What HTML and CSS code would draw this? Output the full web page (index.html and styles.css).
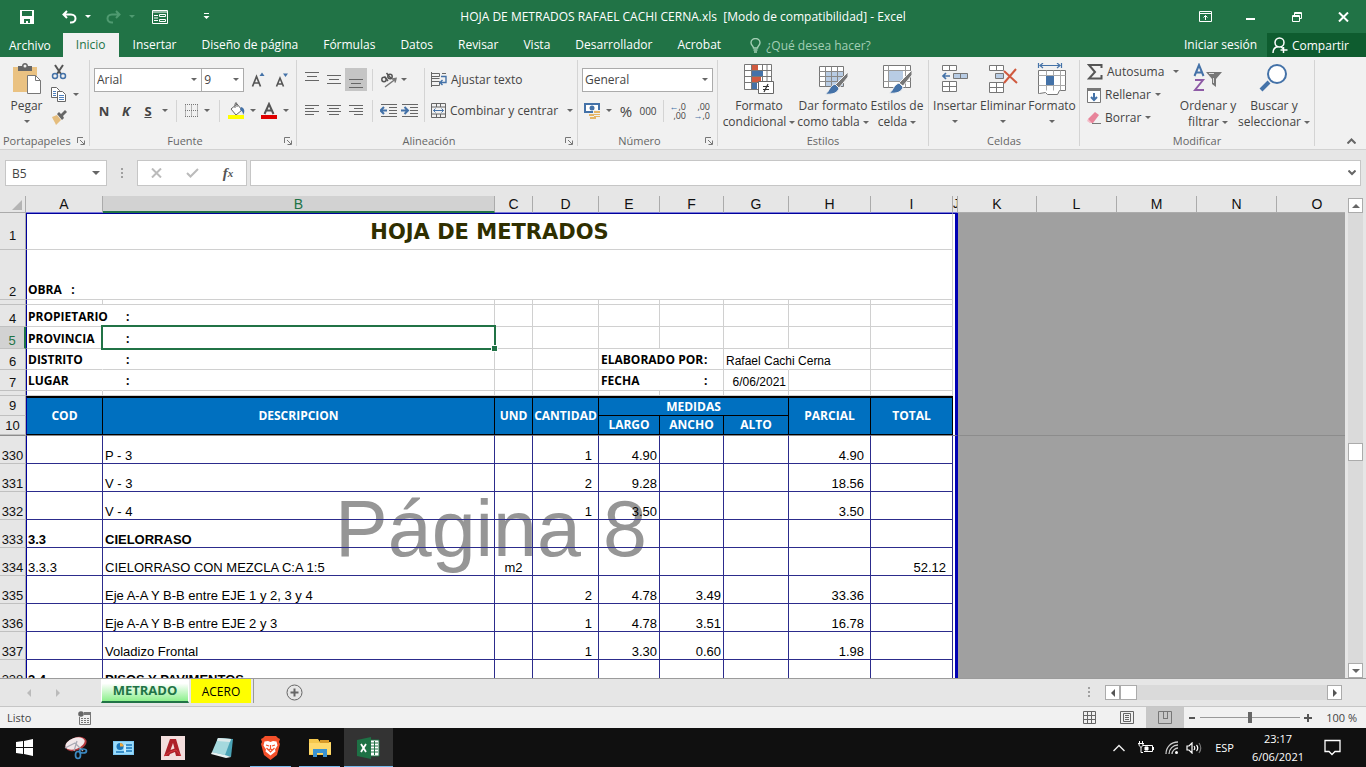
FILE: index.html
```html
<!DOCTYPE html>
<html lang="es">
<head>
<meta charset="utf-8">
<title>HOJA DE METRADOS RAFAEL CACHI CERNA.xls - Excel</title>
<link rel="stylesheet" href="styles.css">
</head>
<body>
<div class="app">

<header class="titlebar">
  <div class="quick">
    <button class="qbtn q-save" aria-label="Guardar"><svg width="14" height="14" viewBox="0 0 14 14"><path d="M0 0h14v14H0z" fill="#fff"/><path d="M2 1h10v5H2zM4 9h6v4H8v-2H6v2H4z" fill="#217346"/></svg></button>
    <button class="qbtn q-undo" aria-label="Deshacer"><svg width="15" height="14" viewBox="0 0 15 14" fill="none" stroke="#fff" stroke-width="2"><path d="M5 1L1.5 4.500 5 8M2 4.500h7c6 0 6 8 0 8H8"/></svg><i class="caret light"></i></button>
    <button class="qbtn q-redo" aria-label="Rehacer"><svg width="15" height="14" viewBox="0 0 15 14" fill="none" stroke="#4f9a70" stroke-width="2"><path d="M10 1l3.500 3.500L10 8M13 4.500H6c-6 0-6 8 0 8h1"/></svg><i class="caret dim"></i></button>
    <button class="qbtn q-form" aria-label="Formulario"><svg width="16" height="14" viewBox="0 0 16 14" fill="none" stroke="#fff"><path d="M.5.500h15v13H.5zM0 2h16M2 5.500h4M2 8h4M2 10.500h4M7.500 4.500h6v2h-6zM7.500 9.500h6v2h-6z"/></svg></button>
    <button class="qbtn q-more" aria-label="Personalizar"><svg width="7" height="7" viewBox="0 0 7 7"><path d="M1 0h5v1H1zM.500 3h6L3.500 6z" fill="#fff"/></svg></button>
  </div>
  <div class="doc-title">HOJA DE METRADOS RAFAEL CACHI CERNA.xls&nbsp; [Modo de compatibilidad] - Excel</div>
  <div class="window-buttons">
    <button aria-label="Opciones de cinta"><svg width="13" height="11" viewBox="0 0 13 11" fill="none" stroke="#fff"><path d="M.5.500h12v10H.5zM0 2.500h13M6.500 9V4.500M4.500 6.500l2-2 2 2"/></svg></button>
    <button aria-label="Minimizar"><svg width="10" height="11" viewBox="0 0 10 11"><path d="M0 7h9v2H0z" fill="#fff"/></svg></button>
    <button aria-label="Restaurar"><svg width="10" height="10" viewBox="0 0 10 10" fill="none" stroke="#fff"><path d="M.5 3.500h7v6h-7zM0 4.500h8M2.500 3V.500h7v6H8M2 1.500h8"/></svg></button>
    <button aria-label="Cerrar"><svg width="11" height="10" viewBox="0 0 11 10" stroke="#fff" stroke-width="2"><path d="M1 .500l9 9M10 .500l-9 9"/></svg></button>
  </div>
</header>

<nav class="tabs">
  <a class="tab file" href="#">Archivo</a>
  <a class="tab active" href="#">Inicio</a>
  <a class="tab" href="#">Insertar</a>
  <a class="tab" href="#">Diseño de página</a>
  <a class="tab" href="#">Fórmulas</a>
  <a class="tab" href="#">Datos</a>
  <a class="tab" href="#">Revisar</a>
  <a class="tab" href="#">Vista</a>
  <a class="tab" href="#">Desarrollador</a>
  <a class="tab" href="#">Acrobat</a>
  <a class="tab tellme" href="#"><svg width="11" height="15" viewBox="0 0 11 15" fill="none" stroke="#a3cfb5" stroke-width="1.400"><path d="M3.500 10C3.500 8 1 7.500 1 4.800a4.500 4.300 0 0 1 9 0C10 7.500 7.500 8 7.500 10zM3.500 12h4M4 14h3"/></svg>¿Qué desea hacer?</a>
  <a class="signin" href="#">Iniciar sesión</a>
  <button class="share"><svg width="16" height="17" viewBox="0 0 16 17" fill="none" stroke="#fff" stroke-width="1.500"><circle cx="7.500" cy="5.500" r="4.500"/><path d="M1 16c0-4 2.500-6 5-6.500M9 10l2 1.500M11.500 10v6M8.500 13h7"/></svg>Compartir</button>
</nav>

<section class="ribbon">
  <div class="group g-clip">
    <div class="body">
      <button class="big b-paste"><svg width="30" height="32" viewBox="0 0 30 32"><path d="M1 4h24v25H1z" fill="#eac282"/><path d="M6 3h4c0-4 6-4 6 0h4v5H6z" fill="#666"/><circle cx="13" cy="3" r="1.500" fill="#f1f1f1"/><path d="M15.500 12.500h8l5 5v13h-13z" fill="#fff" stroke="#777"/><path d="M23.500 12.500v5h5" fill="none" stroke="#777"/></svg><span>Pegar</span><i class="caret"></i></button>
      <div class="stack">
        <button aria-label="Cortar"><svg width="16" height="16" viewBox="0 0 16 16" fill="none" stroke-width="1.500"><path d="M4 1l6 9M12 1l-6 9" stroke="#555" stroke-width="2"/><circle cx="4" cy="12" r="2.500" stroke="#4472a8"/><circle cx="12" cy="12" r="2.500" stroke="#4472a8"/></svg></button>
        <button aria-label="Copiar"><svg width="16" height="15" viewBox="0 0 16 15" fill="#fff" stroke="#666"><path d="M.5.500h5l3 3v7h-8z"/><path d="M6.500 4.500h5l3 3v7h-8z"/><path d="M2 4.500h3M2 6.500h3M2 8.500h3M8 8.500h5M8 10.500h5M8 12.500h5" stroke="#4f81bd"/></svg><i class="caret"></i></button>
        <button aria-label="Copiar formato"><svg width="17" height="15" viewBox="0 0 17 15"><path d="M1 7l5-2 4 5-5 5C4 12 2 10 1 7z" fill="#e5bd7d"/><path d="M6 4l2-2 2 2 4-4 2 2-4 4 1 2-2 2z" fill="#666"/></svg></button>
      </div>
    </div>
    <div class="glabel"><span>Portapapeles</span><button class="launch" aria-label="Más"><svg width="8" height="8" viewBox="0 0 8 8" fill="none" stroke="#777"><path d="M.5 6V.500H6M3 3l4 4M7.500 3.500v4h-4"/></svg></button></div>
  </div>

  <div class="group g-font">
    <div class="body rows">
      <div class="row">
        <span class="pick p-font"><select aria-label="Fuente"><option>Arial</option></select><i class="caret"></i></span><span class="pick p-size"><select aria-label="Tamaño"><option>9</option></select><i class="caret"></i></span>
        <button class="w24 grow-a" aria-label="Aumentar"><svg width="14" height="16" viewBox="0 0 14 16"><path d="M1.500 14.500L5.500 4.500l4 10M3 11h5" fill="none" stroke="#555" stroke-width="1.700"/><path d="M8.500 4L11 .500 13.500 4z" fill="#4472a8"/></svg></button>
        <button class="w24" aria-label="Disminuir"><svg width="13" height="16" viewBox="0 0 13 16"><path d="M1.500 14.500L5 6l3.500 8.500M3 12h4" fill="none" stroke="#555" stroke-width="1.600"/><path d="M8 1.500h5L10.500 5z" fill="#4472a8"/></svg></button>
      </div>
      <div class="row">
        <button class="w22 bold">N</button><button class="w22 bold ital">K</button><button class="w22 bold under">S</button><button class="w12"><i class="caret"></i></button>
        <i class="sep"></i>
        <button class="w18" aria-label="Bordes"><svg width="13" height="13" viewBox="0 0 13 13" fill="none" stroke="#777"><path d="M.5.500v12M6.500.500v12M12.500.500v12M0 .500h13M0 6.500h13" stroke-dasharray="1 1"/><path d="M0 12.500h13" stroke="#777" stroke-dasharray="1 1"/></svg></button><button class="w14"><i class="caret"></i></button>
        <i class="sep"></i>
        <button class="w22" aria-label="Relleno"><svg width="17" height="17" viewBox="0 0 17 17"><path d="M3 7l6-5 5 6-6 5z" fill="#fff" stroke="#666"/><path d="M7 6V2q1-3 2 0v3" fill="none" stroke="#666"/><path d="M13 5c4 1 4 5 2 8 0-3-1-4-3-5z" fill="#4472a8"/><path d="M0 13h16v4H0z" fill="#ff0"/></svg></button><button class="w11"><i class="caret"></i></button>
        <button class="w22" aria-label="Color de fuente"><svg width="16" height="17" viewBox="0 0 16 17"><path d="M3.500 12L8 2l4.500 10M5 8.500h6" fill="none" stroke="#555" stroke-width="2"/><path d="M0 13h16v4H0z" fill="#e00000"/></svg></button><button class="w11"><i class="caret"></i></button>
      </div>
    </div>
    <div class="glabel"><span>Fuente</span><button class="launch" aria-label="Más"><svg width="8" height="8" viewBox="0 0 8 8" fill="none" stroke="#777"><path d="M.5 6V.500H6M3 3l4 4M7.500 3.500v4h-4"/></svg></button></div>
  </div>

  <div class="group g-align">
    <div class="body">
      <div class="rows">
        <div class="row">
          <button class="w22" aria-label="Arriba"><svg width="14" height="16" viewBox="0 0 14 16" stroke="#666"><path d="M0 .500h14M2 4.500h10M0 8.500h14"/></svg></button><button class="w22" aria-label="Medio"><svg width="14" height="16" viewBox="0 0 14 16" stroke="#666"><path d="M0 3.500h14M2 7.500h10M0 11.500h14"/></svg></button><button class="w22 pressed" aria-label="Abajo"><svg width="14" height="16" viewBox="0 0 14 16" stroke="#666"><path d="M0 7.500h14M2 11.500h10M0 15.500h14"/></svg></button>
          <i class="sep"></i>
          <button class="w20" aria-label="Orientación"><svg width="17" height="16" viewBox="0 0 17 16" fill="none" stroke="#555" stroke-width="1.500"><circle cx="4" cy="7.500" r="2.200"/><path d="M4.500 4.500l3.500 4.500M6.500 1l5 6"/><circle cx="10" cy="4.500" r="2.200"/><path d="M5 15L15 7.500M12 7l4-.500-1 4" stroke="#777"/></svg></button><button class="w12"><i class="caret"></i></button>
        </div>
        <div class="row">
          <button class="w22" aria-label="Izquierda"><svg width="14" height="11" viewBox="0 0 14 11" stroke="#666"><path d="M0 .500h14M0 3.500h9M0 6.500h14M0 9.500h9"/></svg></button><button class="w22" aria-label="Centro"><svg width="14" height="11" viewBox="0 0 14 11" stroke="#666"><path d="M0 .500h14M2 3.500h10M0 6.500h14M2 9.500h10"/></svg></button><button class="w22" aria-label="Derecha"><svg width="14" height="11" viewBox="0 0 14 11" stroke="#666"><path d="M0 .500h14M5 3.500h9M0 6.500h14M5 9.500h9"/></svg></button>
          <i class="sep"></i>
          <button class="w20" aria-label="Menos sangría"><svg width="17" height="13" viewBox="0 0 17 13" fill="none" stroke="#666"><path d="M1 .500h16M9 3.500h8M9 6.500h8M9 9.500h8M1 12.500h16"/><path d="M0 6.500h7M4 3L.5 6.500 4 10" stroke="#4472a8" stroke-width="2"/></svg></button><button class="w22" aria-label="Más sangría"><svg width="17" height="13" viewBox="0 0 17 13" fill="none" stroke="#666"><path d="M1 .500h16M9 3.500h8M9 6.500h8M9 9.500h8M1 12.500h16"/><path d="M0 6.500h7M3.500 3L7 6.500 3.500 10" stroke="#4472a8" stroke-width="2"/></svg></button>
        </div>
      </div>
      <i class="sep tall"></i>
      <div class="rows">
        <div class="row"><button class="wide"><svg width="16" height="16" viewBox="0 0 16 16" fill="none" stroke="#666"><path d="M.5 1.500h8v3h-8zM.5 6.500h8M.5 9.500h8v4h-8zM11 1.500h4M.5 0v15"/><path d="M10 4.500h5v6H9M11.500 8L9 10.500l2.500 2.500" stroke="#4472a8" stroke-width="1.400"/></svg>Ajustar texto</button></div>
        <div class="row"><button class="wide"><svg width="15" height="15" viewBox="0 0 15 15" fill="none" stroke="#666"><path d="M.5.500h14v14H.5zM.5 4h14M.5 11h14M5.500.500V4M9.500.500V4M5.500 11v3.500M9.500 11v3.500"/><path d="M2.500 7.500h10M4.500 5.500l-2 2 2 2M10.500 5.500l2 2-2 2" stroke="#4472a8"/></svg>Combinar y centrar<i class="caret end"></i></button></div>
      </div>
    </div>
    <div class="glabel"><span>Alineación</span><button class="launch" aria-label="Más"><svg width="8" height="8" viewBox="0 0 8 8" fill="none" stroke="#777"><path d="M.5 6V.500H6M3 3l4 4M7.500 3.500v4h-4"/></svg></button></div>
  </div>

  <div class="group g-num">
    <div class="body rows">
      <div class="row"><span class="pick p-num"><select aria-label="Formato de número"><option>General</option></select><i class="caret"></i></span></div>
      <div class="row">
        <button class="w22" aria-label="Moneda"><svg width="17" height="17" viewBox="0 0 17 17"><path d="M1 2h14v8H1z" fill="#fff" stroke="#4472a8" stroke-width="2"/><circle cx="8" cy="6" r="2.500" fill="#4472a8"/><path d="M9 8h7v8H5v-4h4z" fill="#f1f1f1"/><path d="M10 9h6v2h-6zM10 12h6v1h-6zM5 12h5v2H5zM6 15h6v2H6zM10 14h6v1h-6z" fill="#e5b566"/></svg></button><button class="w11"><i class="caret"></i></button>
        <button class="w24 pct">%</button><button class="w20 mil">000</button>
        <i class="sep"></i>
        <button class="w20 dec" aria-label="Aumentar decimales"><span><b>←</b>,0</span><span>,00</span></button><button class="w24 dec" aria-label="Disminuir decimales"><span>,00</span><span><b>→</b>,0</span></button>
      </div>
    </div>
    <div class="glabel"><span>Número</span><button class="launch" aria-label="Más"><svg width="8" height="8" viewBox="0 0 8 8" fill="none" stroke="#777"><path d="M.5 6V.500H6M3 3l4 4M7.500 3.500v4h-4"/></svg></button></div>
  </div>

  <div class="group g-styles">
    <div class="body">
      <button class="big w74"><svg width="32" height="32" viewBox="0 0 32 32"><path d="M1.500 1.500h27v25h-27z" fill="#fff" stroke="#777"/><path d="M1.500 7.500h27M1.500 13.500h27M1.500 19.500h27M8.500 1.500v25M19.500 1.500v25M24 1.500v25" stroke="#777" fill="none"/><path d="M9 2h6v5H9zM9 14h9v5H9z" fill="#d05a3f"/><path d="M9 8h11v5H9zM9 20h5v6H9z" fill="#4472a8"/><path d="M15.500 18.500h15v12h-15z" fill="#fff" stroke="#666"/><path d="M20 23.500h6M20 26.500h6M25 21l-4 8" stroke="#333" stroke-width="1.200"/></svg><span>Formato</span><span>condicional<i class="caret"></i></span></button>
      <button class="big w74"><svg width="32" height="32" viewBox="0 0 32 32"><path d="M2.500 3.500h24v20h-24z" fill="#fff" stroke="#777"/><path d="M8 9h18v14H8z" fill="#b8cce4"/><path d="M2.500 8.500h24M2.500 13.500h24M2.500 18.500h24M8.500 3.500v20M14.500 3.500v20M20.500 3.500v20" stroke="#888" fill="none"/><path d="M31 9v5l-9 11-4-3z" fill="#777" stroke="#f1f1f1"/><path d="M18 21l4 4c-1 5-7 7-14 6 4-1 4-8 10-10z" fill="#4472a8" stroke="#f1f1f1"/></svg><span>Dar formato</span><span>como tabla<i class="caret"></i></span></button>
      <button class="big w54"><svg width="32" height="32" viewBox="0 0 32 32"><path d="M2.500 2.500h27v22h-27z" fill="#fff" stroke="#777"/><path d="M2.500 7.500h27M2.500 18.500h27M7.500 2.500v22M24.500 2.500v22" stroke="#999" fill="none"/><path d="M8 8h14v10H8z" fill="#b8cce4"/><path d="M31 7v5l-9 11-4-3z" fill="#777" stroke="#f1f1f1"/><path d="M18 20l4 4c-1 5-7 7-14 6 4-1 4-8 10-10z" fill="#4472a8" stroke="#f1f1f1"/></svg><span>Estilos de</span><span>celda<i class="caret"></i></span></button>
    </div>
    <div class="glabel"><span>Estilos</span></div>
  </div>

  <div class="group g-cells">
    <div class="body">
      <button class="big w48"><svg width="28" height="32" viewBox="0 0 28 32" fill="#fff" stroke="#777"><path d="M1.500 2.500h14v5h-14zM8.500 2.500v5M1.500 18.500h14v10h-14zM8.500 18.500v10M1.500 23.500h14"/><path d="M12.500 10.500h14v5h-14z" fill="#b8cce4"/><path d="M19.500 10.500v5"/><path d="M2 13h7M5 10l-3 3 3 3" fill="none" stroke="#4472a8" stroke-width="1.700"/></svg><span>Insertar</span><i class="caret"></i></button>
      <button class="big w48"><svg width="30" height="32" viewBox="0 0 30 32" fill="#fff" stroke="#777"><path d="M1.500 2.500h14v5h-14zM8.500 2.500v5M1.500 19.500h14v10h-14zM8.500 19.500v10M1.500 24.500h14"/><path d="M7.500 10.500h8v5h-8z" fill="#b8cce4"/><path d="M16 8l13 12M28 6L16 20" fill="none" stroke="#d05a3f" stroke-width="2"/></svg><span>Eliminar</span><i class="caret"></i></button>
      <button class="big w50"><svg width="30" height="32" viewBox="0 0 30 32" fill="#fff" stroke="#777"><path d="M1.500 7.500h27v20h-6l-2 4h-10l-2-2-6 1h-1z"/><path d="M1.500 12.500h27M1.500 22.500h27M9.500 7.500v20M16.500 7.500v20M23.500 7.500v20" stroke="#aaa"/><path d="M9 13h8v9H9z" fill="#4472a8" stroke="none"/><path d="M1.500 0v5M24.500 0v5M3 2.500h20M6 0L3 2.500 6 5M20 0l3 2.500L20 5" fill="none" stroke="#4472a8" stroke-width="1.200"/></svg><span>Formato</span><i class="caret"></i></button>
    </div>
    <div class="glabel"><span>Celdas</span></div>
  </div>

  <div class="group g-edit">
    <div class="body">
      <div class="stack">
        <button><svg width="16" height="16" viewBox="0 0 16 16" fill="none" stroke="#555" stroke-width="2"><path d="M14.500 4V1H2l6 7-6 6.500h12.500V11"/></svg>Autosuma<i class="caret end"></i></button>
        <button><svg width="14" height="16" viewBox="0 0 14 16" fill="none"><path d="M.5 3.500h13v12H.5z" fill="#fff" stroke="#777"/><path d="M0 1h14v3H0z" fill="#777"/><path d="M7 6v7M4 10l3 3 3-3" stroke="#4472a8" stroke-width="2"/></svg>Rellenar<i class="caret"></i></button>
        <button><svg width="14" height="14" viewBox="0 0 14 14"><path d="M1 8l7-7 4 3-6 8H3z" fill="#e8849a"/><path d="M1 8l4 4H3L0 10z" fill="#f4bcc8"/><path d="M5 12.500h9" stroke="#777"/></svg>Borrar<i class="caret"></i></button>
      </div>
      <button class="big w58"><svg width="30" height="32" viewBox="0 0 30 32" fill="none"><path d="M1.500 13L6 2l4.500 11M3 9.500h6" stroke="#4472a8" stroke-width="2"/><path d="M2 17h8L2 27h9" stroke="#8e5ba6" stroke-width="2"/><path d="M13 9h16l-6 7v8l-4-3v-5z" fill="#777"/><path d="M16 10.500h5M20.500 15v5" stroke="#ddd"/></svg><span>Ordenar y</span><span>filtrar<i class="caret"></i></span></button>
      <button class="big w74"><svg width="30" height="32" viewBox="0 0 30 32" fill="none" stroke="#4472a8"><path d="M2 27l8-8" stroke-width="4"/><circle cx="18" cy="11" r="9" fill="#fff" stroke-width="2"/></svg><span>Buscar y</span><span>seleccionar<i class="caret"></i></span></button>
    </div>
    <div class="glabel"><span>Modificar</span></div>
  </div>
  <button class="collapse" aria-label="Contraer"><svg width="9" height="6" viewBox="0 0 9 6" fill="none" stroke="#666" stroke-width="2"><path d="M.500 5.500l4-4 4 4"/></svg></button>
</section>

<section class="formula">
  <div class="namebox"><input type="text" value="B5" aria-label="Cuadro de nombres"><i class="caret big-caret"></i></div>
  <i class="dots"></i>
  <div class="fx">
    <button aria-label="Cancelar"><svg width="11" height="10" viewBox="0 0 11 10" stroke="#bbb" stroke-width="2"><path d="M1 .500l9 9M10 .500l-9 9"/></svg></button>
    <button aria-label="Introducir"><svg width="13" height="10" viewBox="0 0 13 10" fill="none" stroke="#bbb" stroke-width="2"><path d="M1 5l3.500 3.500L12 1"/></svg></button>
    <button class="fxb">f<small>x</small></button>
  </div>
  <div class="fbar"><input type="text" aria-label="Barra de fórmulas"><svg width="8" height="6" viewBox="0 0 8 6" fill="none" stroke="#666" stroke-width="2"><path d="M.500.500L4 4 7.500.500"/></svg></div>
</section>

<main class="sheet">
  <div class="cells">
    <div class="watermark">Página 8</div>
    <table>
      <colgroup><col class="c-hdr"><col class="c-a"><col class="c-b"><col class="c-c"><col class="c-d"><col class="c-e"><col class="c-f"><col class="c-g"><col class="c-h"><col class="c-i"><col class="c-j"><col class="c-k"><col class="c-l"><col class="c-l"><col class="c-l"><col></colgroup>
      <thead>
        <tr class="letters"><th class="corner"><i></i></th><th>A</th><th class="sel">B</th><th>C</th><th>D</th><th>E</th><th>F</th><th>G</th><th>H</th><th>I</th><th class="tiny"><span>J</span></th><th class="beyond">K</th><th class="beyond">L</th><th class="beyond">M</th><th class="beyond">N</th><th class="beyond last">O</th></tr>
      </thead>
      <tbody class="top">
        <tr class="r37"><th class="n1">1</th><td class="name" colspan="9">HOJA DE METRADOS</td><td class="edge"></td><td class="off" colspan="5"></td></tr>
        <tr class="r50"><th>2</th><td class="lab" colspan="9">OBRA&nbsp;&nbsp; :</td><td class="edge"></td><td class="off" colspan="5"></td></tr>
        <tr class="r5"><th class="cut"><span>3</span></th><td></td><td></td><td></td><td></td><td></td><td></td><td></td><td></td><td></td><td class="edge"></td><td class="off" colspan="5"></td></tr>
        <tr class="r22"><th>4</th><td class="lab open"><span>PROPIETARIO</span>:</td><td></td><td></td><td></td><td></td><td></td><td></td><td></td><td></td><td class="edge"></td><td class="off" colspan="5"></td></tr>
        <tr class="r22"><th class="sel">5</th><td class="lab open"><span>PROVINCIA</span>:</td><td class="current"><i></i></td><td></td><td></td><td></td><td></td><td></td><td></td><td></td><td class="edge"></td><td class="off" colspan="5"></td></tr>
        <tr class="r21"><th>6</th><td class="lab open"><span>DISTRITO</span>:</td><td></td><td></td><td></td><td class="lab by" colspan="2"><span>ELABORADO POR</span>:</td><td class="val open">Rafael Cachi Cerna</td><td></td><td></td><td class="edge"></td><td class="off" colspan="5"></td></tr>
        <tr class="r21"><th>7</th><td class="lab open"><span>LUGAR</span>:</td><td></td><td></td><td></td><td class="lab by" colspan="2"><span>FECHA</span>:</td><td class="val num">6/06/2021</td><td></td><td></td><td class="edge"></td><td class="off" colspan="5"></td></tr>
        <tr class="r5"><th></th><td></td><td></td><td></td><td></td><td></td><td></td><td></td><td></td><td></td><td class="edge"></td><td class="off" colspan="5"></td></tr>
        <tr class="r20 heads up"><th>9</th><td rowspan="2">COD</td><td rowspan="2">DESCRIPCION</td><td rowspan="2">UND</td><td rowspan="2">CANTIDAD</td><td colspan="3">MEDIDAS</td><td rowspan="2">PARCIAL</td><td rowspan="2">TOTAL</td><td class="edge"></td><td class="off" colspan="5"></td></tr>
        <tr class="r19 heads"><th>10</th><td class="first-sub">LARGO</td><td>ANCHO</td><td>ALTO</td><td class="edge"></td><td class="off" colspan="5"></td></tr>
      </tbody>
      <tbody class="data">
        <tr class="first"><th>330</th><td></td><td>P - 3</td><td></td><td class="q">1</td><td class="num">4.90</td><td></td><td></td><td class="p">4.90</td><td></td><td class="edge"></td><td class="off" colspan="5"></td></tr>
        <tr><th>331</th><td></td><td>V - 3</td><td></td><td class="q">2</td><td class="num">9.28</td><td></td><td></td><td class="p">18.56</td><td></td><td class="edge"></td><td class="off" colspan="5"></td></tr>
        <tr><th>332</th><td></td><td>V - 4</td><td></td><td class="q">1</td><td class="num">3.50</td><td></td><td></td><td class="p">3.50</td><td></td><td class="edge"></td><td class="off" colspan="5"></td></tr>
        <tr class="strong"><th>333</th><td>3.3</td><td>CIELORRASO</td><td></td><td></td><td></td><td></td><td></td><td></td><td></td><td class="edge"></td><td class="off" colspan="5"></td></tr>
        <tr><th>334</th><td>3.3.3</td><td>CIELORRASO CON MEZCLA C:A 1:5</td><td class="u">m2</td><td></td><td></td><td></td><td></td><td></td><td class="p">52.12</td><td class="edge"></td><td class="off" colspan="5"></td></tr>
        <tr><th>335</th><td></td><td>Eje A-A Y B-B entre EJE 1 y 2, 3 y 4</td><td></td><td class="q">2</td><td class="num">4.78</td><td class="num">3.49</td><td></td><td class="p">33.36</td><td></td><td class="edge"></td><td class="off" colspan="5"></td></tr>
        <tr><th>336</th><td></td><td>Eje A-A Y B-B entre EJE 2 y 3</td><td></td><td class="q">1</td><td class="num">4.78</td><td class="num">3.51</td><td></td><td class="p">16.78</td><td></td><td class="edge"></td><td class="off" colspan="5"></td></tr>
        <tr><th>337</th><td></td><td>Voladizo Frontal</td><td></td><td class="q">1</td><td class="num">3.30</td><td class="num">0.60</td><td></td><td class="p">1.98</td><td></td><td class="edge"></td><td class="off" colspan="5"></td></tr>
        <tr class="strong"><th>338</th><td>3.4</td><td>PISOS Y PAVIMENTOS</td><td></td><td></td><td></td><td></td><td></td><td></td><td></td><td class="edge"></td><td class="off" colspan="5"></td></tr>
      </tbody>
    </table>
  </div>
  <div class="vscroll">
    <button aria-label="Subir"><i class="tri up"></i></button>
    <div class="track"><i class="thumb"></i></div>
    <button aria-label="Bajar"><i class="tri down"></i></button>
  </div>
</main>

<div class="sheettabs">
  <div class="navs"><i class="tri left pale"></i><i class="tri right pale"></i></div>
  <button class="stab on">METRADO</button>
  <button class="stab yellow">ACERO</button>
  <button class="add" aria-label="Hoja nueva"><svg width="17" height="17" viewBox="0 0 17 17" fill="none" stroke="#666"><circle cx="8.500" cy="8.500" r="7.500"/><path d="M4.500 8.500h8M8.500 4.500v8" stroke-width="2"/></svg></button>
  <i class="dots"></i>
  <div class="hscroll">
    <button aria-label="Izquierda"><i class="tri left"></i></button><i class="thumb"></i><div class="track"></div><button aria-label="Derecha"><i class="tri right"></i></button>
  </div>
</div>

<footer class="status">
  <span class="ready">Listo</span>
  <svg width="13" height="14" viewBox="0 0 13 14"><circle cx="3" cy="3" r="2.800" fill="#666"/><path d="M6 1h7v3H6z" fill="#777"/><path d="M1.500 6v7.500h11V4" fill="none" stroke="#777"/><path d="M3 7.500h8M3 9.500h8M3 11.500h8" stroke="#777" stroke-dasharray="2 1"/></svg>
  <div class="views">
    <button aria-label="Normal"><svg width="13" height="13" viewBox="0 0 13 13" fill="none" stroke="#666"><path d="M.5.500h12v12H.5zM.5 4.500h12M.5 8.500h12M4.500.500v12M8.500.500v12"/></svg></button>
    <button aria-label="Diseño"><svg width="14" height="13" viewBox="0 0 14 13" fill="none" stroke="#666"><path d="M.5.500h13v12H.5zM3.500 2.500h7v8h-7zM5 4.500h4M5 6.500h4M5 8.500h4"/></svg></button>
    <button class="on" aria-label="Saltos"><svg width="14" height="13" viewBox="0 0 14 13" fill="none" stroke="#777"><path d="M.5.500h13v12H.5zM5.500.500v7M9.500.500v7M5 7.500h5"/></svg></button>
  </div>
  <button class="zoomb" aria-label="Alejar"><svg width="7" height="8" viewBox="0 0 7 8"><path d="M0 3h6v2H0z" fill="#555"/></svg></button>
  <input class="zoom" type="range" min="0" max="200" value="100" aria-label="Zoom">
  <button class="zoomb" aria-label="Acercar"><svg width="8" height="8" viewBox="0 0 8 8"><path d="M0 3h8v2H0zM3 0h2v8H3z" fill="#555"/></svg></button>
  <span class="pctv">100 %</span>
</footer>

<div class="taskbar">
  <button class="start" aria-label="Inicio"><svg width="17" height="17" viewBox="0 0 17 17" fill="#fff"><path d="M0 3l7-1v6H0zM8 2l9-2v8H8zM0 9h7v6l-7-1zM8 9h9v8l-9-2z"/></svg></button>
  <button aria-label="Recortes"><svg width="26" height="24" viewBox="0 0 26 24"><ellipse cx="14" cy="8" rx="11" ry="6.500" transform="rotate(-20 14 8)" fill="#b33a3f"/><ellipse cx="13" cy="7.500" rx="10" ry="5.500" transform="rotate(-20 13 7.500)" fill="#f2e8ea"/><path d="M3 12l10-5 8 8M15 5l-3 10" fill="none" stroke="#a9a9b4" stroke-width="1.300"/><ellipse cx="21" cy="15" rx="3.500" ry="2" fill="none" stroke="#3c8ac4" stroke-width="1.700"/><ellipse cx="16" cy="19" rx="2.500" ry="3.500" fill="none" stroke="#3c8ac4" stroke-width="1.700"/></svg></button>
  <button aria-label="Panel"><svg width="22" height="16" viewBox="0 0 22 16"><path d="M0 1h21v14H0z" fill="#7cc7f2"/><path d="M1 2h19v12H1z" fill="#9bdcfb"/><circle cx="7" cy="6.500" r="3.500" fill="#1a76ba"/><path d="M7 6.500V3a3.500 3.500 0 0 1 3.500 3.500z" fill="#f3a83c"/><path d="M3 12h8M13 5h6M13 8h6M13 11h6" stroke="#1a76ba" stroke-width="1.500"/><path d="M12 5v7" stroke="#fff"/></svg></button>
  <button aria-label="AutoCAD"><svg width="24" height="24" viewBox="0 0 24 24"><path d="M0 0h24v24H0z" fill="#f3dedd"/><path d="M3 20L9 3h6l5 17h-5l-1-4-5 2-1 2z" fill="#ad2129"/><path d="M9.500 14l2.500-7 1.500 5.500z" fill="#f3dedd"/><path d="M3 20l6-4 6-2 5 6" fill="none" stroke="#d5363c"/></svg></button>
  <button aria-label="Bloc de notas"><svg width="24" height="23" viewBox="0 0 24 23"><path d="M8 2l15 1-2 18-18-4z" fill="#4aa3b6"/><path d="M8 2l13 1-6 16L2 16z" fill="#a5d9de"/><path d="M8 2l13 1-1 3L7 5z" fill="#dce9ea"/><path d="M2 16l13 3 6 2-5 1L1 18z" fill="#e9f2f2"/></svg></button>
  <button class="run" aria-label="Brave"><svg width="21" height="24" viewBox="0 0 21 24"><path d="M5 0h11l2 2 2 1-1 3 1 2-3 11-6.500 5L4 19 1 8l1-2-1-3 2-1z" fill="#f4502a"/><path d="M4.500 5.500L8 5l2.500 1L13 5l3.500.500 1 4-2.500 4 .500 2-5 4-5-4 .500-2-2.500-4z" fill="#fff"/><path d="M6 9l3 1M15 9l-3 1M10.500 9v4l-2 1 2 2 2-2-2-1M6.500 12l2 2M14.500 12l-2 2" fill="none" stroke="#f4502a" stroke-width="1.200"/></svg></button>
  <button class="run" aria-label="Explorador"><svg width="22" height="19" viewBox="0 0 22 19"><path d="M0 1h9l2 3h11v13H0z" fill="#f5c84d"/><path d="M0 5h22v11H0z" fill="#ffd96b"/><path d="M11 2h9v3h-9z" fill="#d99a28"/><path d="M4 19v-8h14v8h-4v-4H8v4z" fill="#3a93d2"/></svg></button>
  <button class="run current-app" aria-label="Excel"><svg width="23" height="22" viewBox="0 0 23 22"><path d="M13 3h9v16h-9z" fill="#fff" stroke="#217346"/><path d="M14 6h7M14 9h7M14 12h7M14 15h7M17.500 4v14" stroke="#217346"/><path d="M0 3l14-3v22L0 19z" fill="#1e7145"/><path d="M4 7l5 8M9 7l-5 8" stroke="#fff" stroke-width="1.800"/></svg></button>
  <div class="tray">
    <svg class="t-up" width="12" height="8" viewBox="0 0 12 8" fill="none" stroke="#eee" stroke-width="1.400"><path d="M.5 7L6 1.500 11.500 7"/></svg>
    <svg class="t-bat" width="16" height="13" viewBox="0 0 16 13" fill="none" stroke="#fff"><path d="M5 4.500h9.500v6H6M15.500 6v3M1.500 0v2M4.500 0v2M0 2.500h6M1 3c0 4 4 4 4 0M3 6v5.500h2"/><path d="M7 6h3v3H7z" fill="#fff"/></svg>
    <svg class="t-net" width="14" height="14" viewBox="0 0 14 14" fill="none" stroke="#ccc" stroke-width="1.300"><path d="M1 13C1 6 6 1 13 1M4 13c0-5 4-9 9-9M7 13c0-3 3-6 6-6"/><circle cx="11.500" cy="11.500" r="1.500" fill="#fff" stroke="none"/></svg>
    <svg class="t-vol" width="16" height="12" viewBox="0 0 16 12" fill="none" stroke="#fff" stroke-width="1.200"><path d="M1 4h2l3-3v10L3 8H1zM8 4q1.500 2 0 4M10.500 3q2.500 3 0 6"/><path d="M13 1q3.500 5 0 10" stroke="#777"/></svg>
    <span class="lang">ESP</span>
    <span class="clock"><span>23:17</span><span>6/06/2021</span></span>
    <svg class="t-note" width="17" height="17" viewBox="0 0 17 17" fill="none" stroke="#fff" stroke-width="1.300"><path d="M1 1.500h15v11h-5l-3 3-3-3H1z"/></svg>
  </div>
</div>
</div>
</body>
</html>
```
FILE: styles.css
```css
* { box-sizing: border-box; }
body { margin: 0; font-family: "Open Sans", "Noto Sans", sans-serif; font-size: 12px; color: #444; }
button { font: inherit; color: inherit; background: none; border: 0; padding: 0; margin: 0; display: flex; align-items: center; justify-content: center; white-space: nowrap; }
input, select { font: inherit; color: inherit; border: 0; background: none; padding: 0; margin: 0; outline: 0; min-width: 0; appearance: none; }
a { color: inherit; text-decoration: none; white-space: nowrap; }
svg { display: block; flex: none; }
.app { height: 100vh; display: flex; flex-direction: column; overflow: hidden; background: #e6e6e6; }

.caret { display: inline-block; flex: none; width: 0; height: 0; border: 3px solid transparent; border-top-color: #666; border-bottom: 0; }
.caret.light { border-top-color: #fff; }
.caret.dim { border-top-color: #4f9a70; }
.tri { display: block; width: 0; height: 0; border: 4px solid transparent; }
.tri.up { border-bottom-color: #666; border-top: 0; }
.tri.down { border-top-color: #666; border-bottom: 0; }
.tri.left { border-right-color: #555; border-left: 0; }
.tri.right { border-left-color: #555; border-right: 0; }
.tri.left.pale { border-right-color: #bbb; }
.tri.right.pale { border-left-color: #bbb; }

.titlebar { flex: none; height: 33px; background: #217346; color: #fff; display: grid; grid-template-columns: 1fr auto 1fr; align-items: center; }
.quick { display: flex; align-items: center; padding-left: 20px; }
.qbtn { gap: 8px; height: 30px; }
.q-undo { margin-left: 28px; }
.q-redo { margin-left: 15px; }
.q-form { margin-left: 17px; }
.q-more { margin-left: 35px; }
.doc-title { white-space: nowrap; }
.window-buttons { display: flex; justify-content: flex-end; }
.window-buttons button { width: 46px; height: 30px; }

.tabs { flex: none; height: 24px; background: #217346; color: #fff; display: flex; }
.tab { padding: 0 13px 0 12px; line-height: 23px; }
.tab.file { padding: 0 12px 0 9px; line-height: 25px; }
.tab.active { background: #f1f1f1; color: #217346; padding: 0 13px; margin-right: 2px; }
.tab.tellme { display: flex; align-items: center; gap: 5px; padding-left: 16px; color: #a3cfb5; }
.signin { margin-left: auto; padding-right: 10px; line-height: 23px; }
.share { background: #0e5c2f; width: 99px; gap: 4px; padding-right: 12px; }

.ribbon { flex: none; height: 93px; background: #f1f1f1; border-bottom: 1px solid #d2d2d2; display: flex; position: relative; }
.group { flex: none; display: flex; flex-direction: column; border-right: 1px solid #d4d4d4; margin: 3px 0; }
.body { flex: 1; display: flex; padding: 0 3px; }
.glabel { height: 16px; display: flex; align-items: center; color: #666; font-size: 11px; position: relative; justify-content: center; margin-bottom: -2px; }
.launch { position: absolute; right: 4px; top: 5px; }
.g-clip { width: 90px; }
.g-clip .glabel { justify-content: flex-start; padding-left: 3px; }
.g-font { width: 207px; }
.g-font .glabel, .g-align .glabel, .g-num .glabel { padding-right: 16px; }
.g-align { width: 281px; }
.g-num { width: 140px; }
.g-styles { width: 211px; }
.g-styles .body { padding-left: 4px; }
.g-cells { width: 151px; }
.g-cells .body { padding: 0 2px; }
.g-edit { width: 235px; }
.collapse { margin: auto 10px 5px auto; }

.big { flex-direction: column; justify-content: flex-start; line-height: 16px; padding-top: 3px; height: 70px; }
.big > svg { margin-bottom: 3px; }
.big span { display: flex; align-items: center; gap: 3px; }
.big > .caret { margin-top: 6px; }
.b-paste { width: 47px; }
.stack { display: flex; flex-direction: column; }
.stack button { height: 23px; justify-content: flex-start; gap: 4px; }
.g-clip .stack { padding-left: 1px; }
.g-clip .stack button { gap: 6px; }
.g-edit .stack { width: 96px; padding-left: 4px; }
.end { margin-left: 5px; }

.rows { display: flex; flex-direction: column; padding-top: 8px; gap: 8px; }
.row { display: flex; align-items: center; height: 23px; }
.row button { height: 23px; }
.body.rows { padding-left: 3px; }
.g-align .body { padding-left: 4px; }
.w11 { width: 11px; } .w12 { width: 12px; } .w14 { width: 14px; } .w18 { width: 18px; } .w20 { width: 20px; } .w22 { width: 22px; } .w24 { width: 24px; }
.w48 { width: 48px; } .w50 { width: 50px; } .w54 { width: 54px; } .w58 { width: 58px; } .w74 { width: 74px; }
.sep { width: 1px; height: 22px; background: #d4d4d4; margin: 0 5px; flex: none; }
.sep.tall { height: 54px; margin: 8px 6px 0 4px; }
.pressed { background: #c5c5c5; }
.bold { font-weight: 700; font-size: 13px; }
.ital { font-style: italic; }
.under { text-decoration: underline; }
.wide { gap: 4px; }
.pick { display: flex; align-items: center; height: 24px; background: #fff; border: 1px solid #ababab; padding: 0 4px 0 2px; }
.pick select { flex: 1; }
.p-font { width: 111px; margin-left: 1px; }
.p-size { width: 43px; border-left: 0; }
.grow-a { margin-left: 2px; }
.p-num { width: 131px; margin-left: 1px; }
.pct { font-size: 15px; }
.mil { font-size: 10px; }
.row .dec { flex-direction: column; align-items: flex-end; font-size: 9px; line-height: 9px; padding-right: 3px; }
.dec b { color: #4472a8; }

.formula { flex: none; height: 46px; display: flex; align-items: center; padding: 0 5px; }
.namebox { width: 102px; height: 26px; background: #fff; border: 1px solid #c6c6c6; display: flex; align-items: center; padding: 0 6px; }
.namebox input { flex: 1; }
.big-caret { border-width: 4px; border-bottom: 0; }
.dots { width: 2px; height: 11px; margin: 0 14px; background: repeating-linear-gradient(#a0a0a0 0 2px, transparent 2px 4px); }
.fx { width: 110px; height: 26px; background: #fff; border: 1px solid #c6c6c6; display: flex; justify-content: space-around; }
.fx button { width: 36px; }
.fxb { font-family: "Liberation Serif", serif; font-style: italic; font-size: 15px; font-weight: 700; color: #555; }
.fxb small { font-size: 11px; }
.fbar { flex: 1; height: 26px; margin-left: 3px; background: #fff; border: 1px solid #c6c6c6; display: flex; align-items: center; padding: 0 4px; }
.fbar input { flex: 1; }

.sheet { flex: 1; min-height: 0; display: flex; font-family: "Liberation Sans", Arial, sans-serif; color: #000; }
.cells { flex: 1; min-width: 0; overflow: hidden; position: relative; background: #fff; z-index: 0; }
.watermark { position: absolute; z-index: -1; left: 335px; top: 287px; font-size: 79px; line-height: 92px; color: #969696; white-space: nowrap; }
table { border-collapse: separate; border-spacing: 0; table-layout: fixed; width: 100%; }
.c-hdr { width: 26px; } .c-a { width: 77px; } .c-b { width: 392px; } .c-c { width: 38px; } .c-d { width: 66px; } .c-e { width: 61px; } .c-f { width: 64px; } .c-g { width: 65px; } .c-h, .c-i { width: 82px; } .c-j { width: 5px; } .c-k { width: 79px; } .c-l { width: 80px; }
th, td { padding: 0; white-space: nowrap; }
th { font-weight: 400; font-size: 14px; background: #e6e6e6; border-right: 1px solid #ababab; border-bottom: 1px solid #c0c0c0; line-height: 15px; color: #111; }
.letters { height: 17px; }
.letters th { border-bottom: 1px solid #7a7ad8; }
.letters th.corner, .letters th.beyond { border-bottom-color: #ababab; }
.letters th.sel { background: #d2d2d2; color: #217346; border-bottom: 2px solid #217346; line-height: 14px; }
.letters th.last { border-right: 0; padding-left: 12px; }
.letters .corner i { display: block; width: 0; height: 0; margin: 2px 3px 0 auto; border: 5px solid #b4b4b4; border-top-color: transparent; border-left-color: transparent; }
.tiny span { display: block; overflow: hidden; width: 4px; font-size: 12px; }
tbody th { vertical-align: bottom; font-size: 13px; }
tbody th.n1 { padding-bottom: 6px; }
tbody th.sel { background: #d2d2d2; color: #217346; border-right: 2px solid #217346; }
.r37 { height: 37px; } .r50 { height: 50px; } .r5 { height: 5px; } .r22 { height: 22px; } .r21 { height: 21px; } .r20 { height: 20px; } .r19 { height: 19px; }
.cut span { display: flex; align-items: flex-end; justify-content: center; height: 3px; overflow: hidden; }
.top td { border-right: 1px solid #d0d0d0; border-bottom: 1px solid #d0d0d0; background: #fff; }
th + td { border-left: 1px solid #00009c; }
.top .open { border-right-color: transparent; }
.top .open, .top .open + td { background: none; }
.r37 td { border-top: 1px solid #00009c; }
.top td.name { font-family: "DejaVu Sans", sans-serif; font-weight: 700; font-size: 21px; line-height: 30px; text-align: center; color: #2f2f00; }
.top .lab { font-family: "Open Sans", sans-serif; font-weight: 700; font-size: 12px; line-height: 16px; vertical-align: bottom; padding: 0 0 1px 1px; }
.lab span { display: inline-block; width: 98px; }
.top .by { padding-left: 2px; }
.top .by span { width: 103px; }
.val { font-size: 12px; line-height: 15px; vertical-align: bottom; padding: 0 2px; }
.num { text-align: right; }
.current { position: relative; }
.current::after { content: ""; position: absolute; inset: -2px; border: 2px solid #217346; }
.current i { position: absolute; z-index: 1; right: -4px; bottom: -4px; width: 7px; height: 7px; background: #217346; border: 1px solid #fff; }
.top .edge, .data .edge { border-right: 3px solid #0000b4; border-bottom: 0; padding: 0; }
.top .off, .data .off { background: #a0a0a0; border: 0; }
.heads td { font-family: "Open Sans", sans-serif; font-weight: 700; font-size: 12px; line-height: 16px; text-align: center; }
.top .heads td:not(.edge, .off) { background: #0070c0; color: #fff; border-right: 1px solid #000; border-bottom: 1px solid #000; }
.top .up td:not(.edge, .off) { border-top: 2px solid #000; }
.top .heads td.first-sub { border-left: 0; }
.heads th { vertical-align: middle; }
.data tr { height: 28px; }
.data .first { height: 29px; }
.data td, .data th { font-size: 13px; line-height: 15px; vertical-align: bottom; }
.data td { border-right: 1px solid #2c2c8c; border-bottom: 1px solid #2c2c8c; padding: 0 2px; }
.data .first td, .data .first th { border-top: 1px solid #8c8c8c; }
.data .strong td { font-weight: 700; }
.data td:nth-child(2) { padding-left: 1px; }
.data .q, .data .p { text-align: right; padding-right: 6px; }
.data .u { text-align: center; }

.vscroll { width: 21px; flex: none; padding: 2px 3px 0; display: flex; flex-direction: column; }
.vscroll button, .hscroll button { width: 15px; height: 15px; background: #fff; border: 1px solid #ababab; flex: none; }
.vscroll .track { flex: 1; background: #dadada; padding-top: 230px; }
.vscroll .thumb { display: block; height: 18px; background: #fff; border: 1px solid #ababab; }

.sheettabs { flex: none; height: 28px; border-top: 1px solid #9b9b9b; display: flex; align-items: center; color: #000; }
.navs { width: 101px; display: flex; gap: 25px; padding-left: 27px; }
.stab { height: 24px; align-self: flex-start; }
.stab.on { width: 88px; font-size: 13px; font-weight: 700; color: #217346; background: linear-gradient(#fff 20%, #8cf08c); border: 1px solid #fff; border-top: 0; border-bottom: 2px solid #217346; }
.stab.yellow { width: 64px; background: #ff0; border: solid #e6e6e6; border-width: 0 2px; box-shadow: 1px 0 #999; }
.add { margin-left: 33px; }
.sheettabs .dots { margin: 0 15px 0 auto; }
.hscroll { width: 237px; display: flex; margin-right: 24px; }
.hscroll .thumb { width: 17px; height: 15px; background: #fff; border: 1px solid #ababab; }
.hscroll .track { flex: 1; background: #dadada; }

.status { flex: none; height: 22px; background: #f1f1f1; border-top: 1px solid #c6c6c6; display: flex; align-items: center; font-size: 11px; padding-right: 9px; }
.ready { width: 71px; padding-left: 7px; margin-right: 7px; }
.views { margin-left: auto; display: flex; align-self: stretch; margin-right: 5px; }
.views button { width: 38px; }
.views .on { background: #c8c8c8; }
.zoom { width: 100px; height: 12px; margin: 0 4px; background: linear-gradient(#999, #999) center / 100% 1px no-repeat; }
.zoom::-webkit-slider-thumb { appearance: none; width: 4px; height: 11px; background: #666; }
.pctv { margin-left: 14px; }

.taskbar { flex: none; height: 39px; background: #101010; color: #fff; display: flex; }
.taskbar button { width: 49px; }
.taskbar .start { width: 50px; padding-right: 2px; }
.taskbar .run { background: linear-gradient(#76b9ed, #76b9ed) bottom / 41px 1px no-repeat; }
.taskbar .current-app { background-color: #333; background-size: 100% 1px; }
.tray { margin-left: auto; display: flex; align-items: center; padding-right: 25px; font-size: 11px; }
.t-bat { margin-left: 13px; }
.t-net { margin-left: 11px; }
.t-vol { margin-left: 7px; }
.lang { margin-left: 13px; }
.clock { margin-left: 18px; display: flex; flex-direction: column; align-items: center; line-height: 18px; }
.t-note { margin-left: 20px; }
```
